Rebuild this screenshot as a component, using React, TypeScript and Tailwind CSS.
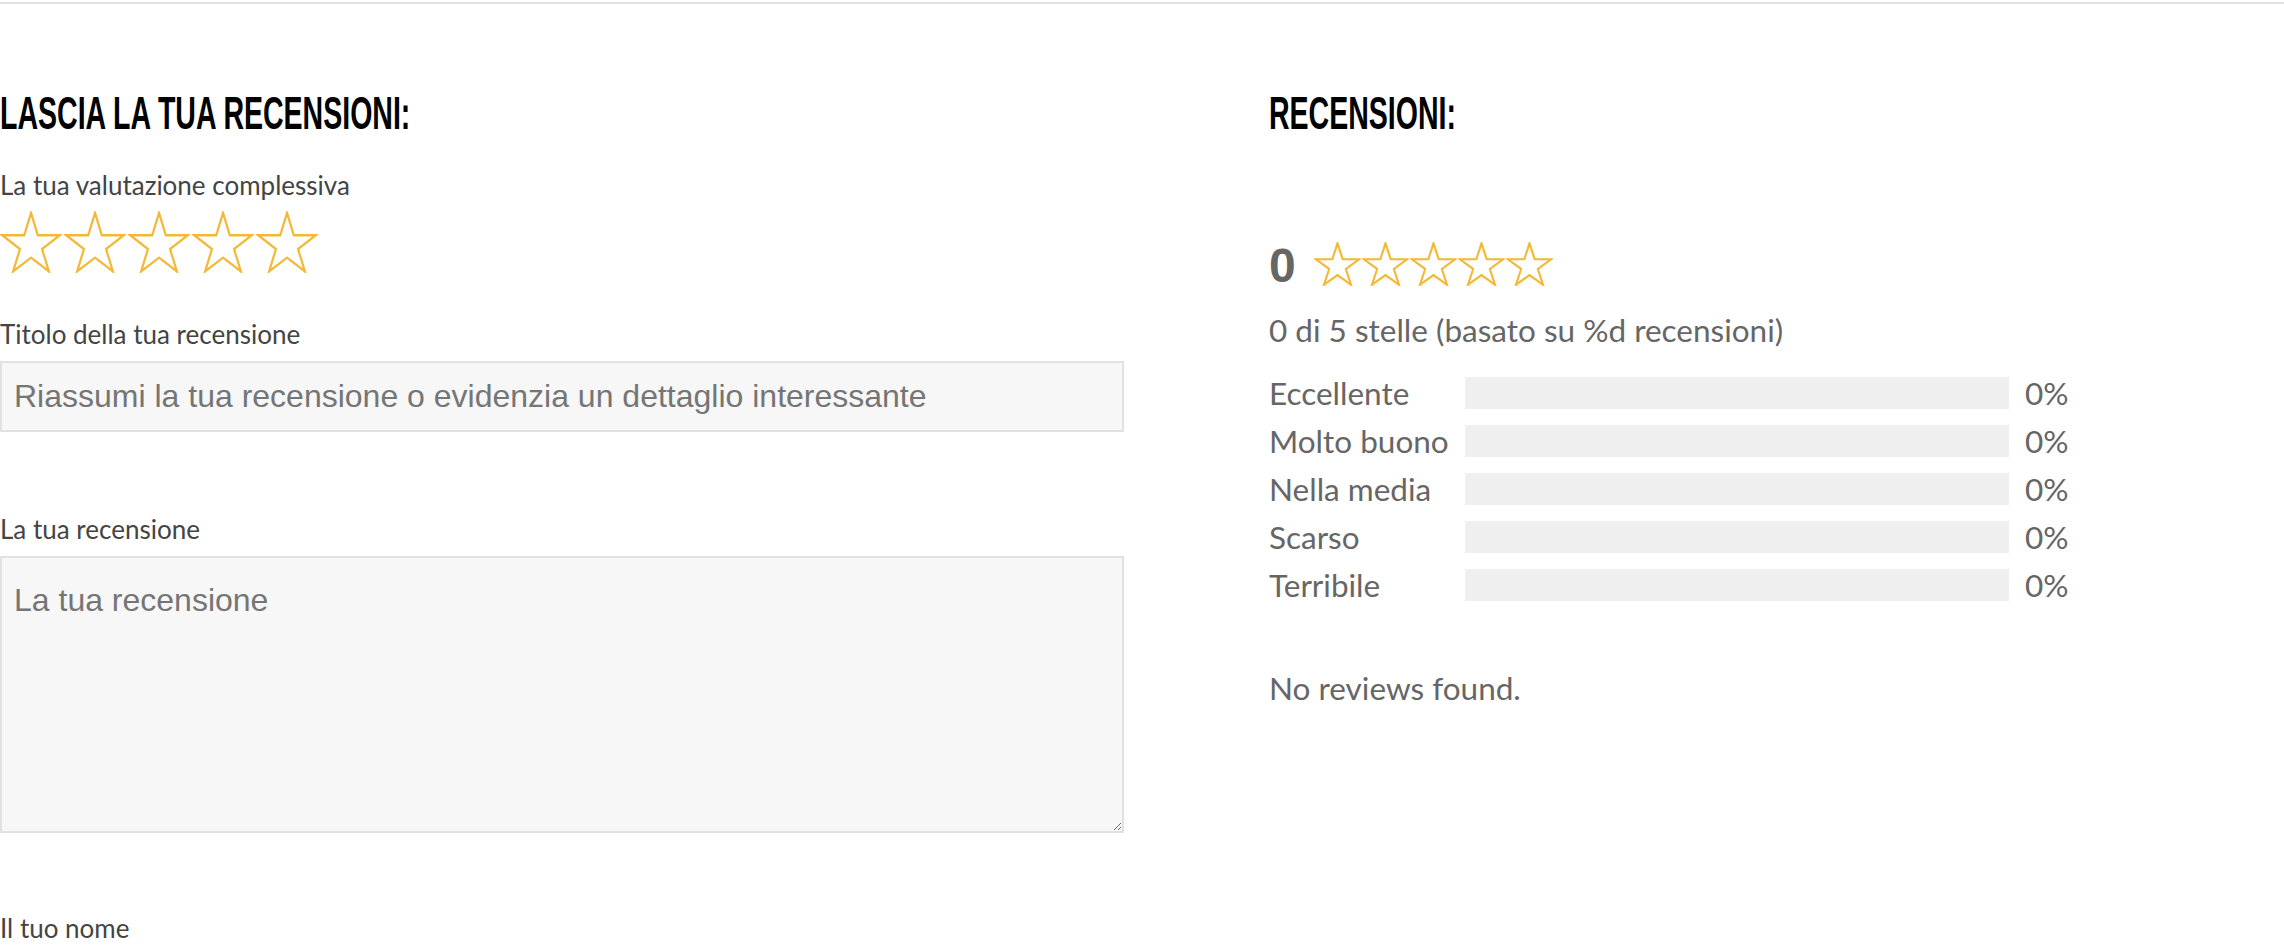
import React from 'react';

// Outline star, same shape for the form rating and the summary
const Star: React.FC<{ w: number; h: number; stroke: number }> = ({ w, h, stroke }) => (
  <svg width={w} height={h} viewBox="0 0 102 96" preserveAspectRatio="none" className="block shrink-0">
    <polygon
      points="51,3 62.23,37.55 98.55,37.55 69.17,58.9 80.39,93.45 51,72.1 21.61,93.45 32.83,58.9 3.45,37.55 39.77,37.55"
      fill="none"
      stroke="#f5b834"
      strokeWidth={stroke}
      strokeLinejoin="miter"
    />
  </svg>
);

const Heading: React.FC<{ children: React.ReactNode }> = ({ children }) => (
  <h2 className="h-[45px] whitespace-nowrap">
    <span className="inline-block origin-left scale-x-[0.62] font-['Liberation_Sans',Arial,sans-serif] text-[46px] font-bold leading-none text-black">
      {children}
    </span>
  </h2>
);

const Label: React.FC<{ children: React.ReactNode; className?: string }> = ({ children, className = '' }) => (
  <label className={`block font-['Lato',sans-serif] text-[26px] leading-[30px] text-[#444] ${className}`}>{children}</label>
);

export default function App() {
  const bars = ['Eccellente', 'Molto buono', 'Nella media', 'Scarso', 'Terribile'];

  return (
    <div className="min-h-screen bg-white">
      <div className="mt-[2px] h-[2px] bg-[#e2e2e2]" />

      <div className="flex pt-[86px]">
        {/* Left: review form */}
        <div className="w-[1124px] shrink-0">
          <Heading>LASCIA LA TUA RECENSIONI:</Heading>

          <Label className="mt-[35px]">La tua valutazione complessiva</Label>
          <div className="mt-[11px] flex gap-[2px]">
            {[0, 1, 2, 3, 4].map(i => (
              <Star key={i} w={62} h={62} stroke={3.6} />
            ))}
          </div>

          <Label className="mt-[46px]">Titolo della tua recensione</Label>
          <input
            type="text"
            placeholder="Riassumi la tua recensione o evidenzia un dettaglio interessante"
            className="mt-[12px] block h-[71px] w-full border-2 border-[#e1e1e1] bg-[#f7f7f7] px-[12px] font-['Liberation_Sans',Arial,sans-serif] text-[32px] text-[#333] outline-none placeholder:text-[#757575]"
          />

          <Label className="mt-[82px]">La tua recensione</Label>
          <textarea
            placeholder="La tua recensione"
            className="mt-[12px] block h-[277px] w-full border-2 border-[#e1e1e1] bg-[#f7f7f7] px-[12px] pt-[24px] font-['Liberation_Sans',Arial,sans-serif] text-[32px] leading-[36px] text-[#333] outline-none placeholder:text-[#757575]"
          />

          <Label className="mt-[80px]">Il tuo nome</Label>
        </div>

        {/* Right: summary */}
        <div className="ml-[145px] w-[820px] font-['Lato',sans-serif] text-[31.5px] text-[#666]">
          <Heading>RECENSIONI:</Heading>

          <div className="mt-[107px] flex items-start">
            <span className="font-['Liberation_Sans',Arial,sans-serif] text-[48px] font-bold leading-none">0</span>
            <div className="ml-[18px] flex gap-[1px]">
              {[0, 1, 2, 3, 4].map(i => (
                <Star key={i} w={47} h={44} stroke={4.6} />
              ))}
            </div>
          </div>

          <p className="mt-[22px] leading-[36px]">0 di 5 stelle (basato su %d recensioni)</p>

          <div className="mt-[29px] flex flex-col gap-[16px]">
            {bars.map(b => (
              <div key={b} className="flex h-[32px] items-center leading-[32px]">
                <span className="w-[196px] shrink-0 whitespace-nowrap">{b}</span>
                <div className="h-[32px] w-[544px] bg-[#efefef]" />
                <span className="ml-[16px]">0%</span>
              </div>
            ))}
          </div>

          <p className="mt-[69px] leading-[36px]">No reviews found.</p>
        </div>
      </div>
    </div>
  );
}
